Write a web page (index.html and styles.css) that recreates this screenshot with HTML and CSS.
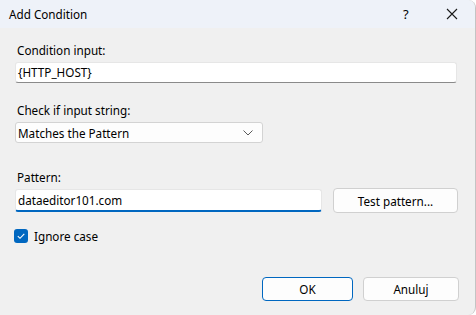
FILE: index.html
```html
<!DOCTYPE html>
<html>
<head>
<meta charset="utf-8">
<link rel="stylesheet" href="styles.css">
</head>
<body>
<div class="window">
  <div class="titlebar">
    <span class="title">Add Condition</span>
    <span class="help">?</span>
    <span class="close">
      <svg width="12" height="12" viewBox="0 0 12 12"><path d="M1 1L11 11M11 1L1 11" stroke="#1a1a1a" stroke-width="1.1" fill="none"/></svg>
    </span>
  </div>
  <div class="content">
    <div class="label l1">Condition input:</div>
    <div class="input wide">{HTTP_HOST}</div>

    <div class="label l2">Check if input string:</div>
    <div class="select">
      <span>Matches the Pattern</span>
      <svg width="10" height="6" viewBox="0 0 10 6"><path d="M0.5 0.5L5 5L9.5 0.5" stroke="#5a5a5a" stroke-width="1" fill="none"/></svg>
    </div>

    <div class="label l3">Pattern:</div>
    <div class="pattern-row">
      <div class="input focused">dataeditor101.com</div>
      <div class="button test">Test pattern...</div>
    </div>

    <div class="check-row">
      <span class="checkbox">
        <svg width="14" height="14" viewBox="0 0 14 14"><path d="M3.8 7.2L6 9.3L10.3 4.8" stroke="#fff" stroke-width="1.1" fill="none"/></svg>
      </span>
      <span class="check-label">Ignore case</span>
    </div>

    <div class="actions">
      <div class="button ok">OK</div>
      <div class="button cancel">Anuluj</div>
    </div>
  </div>
</div>
</body>
</html>
```
FILE: styles.css
```css
html, body {
  margin: 0;
  padding: 0;
  background: #ffffff;
}
body {
  font-family: "Noto Sans", "Open Sans", sans-serif;
  font-size: 11.7px;
  color: #000;
}
.window {
  width: 475px;
  height: 315px;
  background: #f0f0f0;
  border-right: 1px solid #c4c4c4;
  border-top-right-radius: 8px;
  border-bottom-right-radius: 8px;
  overflow: hidden;
  display: flex;
  flex-direction: column;
}
.titlebar {
  height: 28px;
  background: #eef2f9;
  display: flex;
  align-items: center;
  flex-shrink: 0;
}
.title {
  margin-left: 9px;
  flex: 1;
  line-height: 16px;
}
.help {
  width: 10px;
  margin-right: 33px;
  font-size: 13px;
}
.close {
  width: 12px;
  height: 12px;
  margin-right: 17px;
  display: flex;
}
.content {
  padding: 14px 0 0 15px;
  display: flex;
  flex-direction: column;
}
.label {
  height: 16px;
  line-height: 16px;
  margin-left: 2px;
  margin-bottom: 4px;
}
.l2 { margin-top: 19px; }
.l3 { margin-top: 26px; margin-bottom: 3px; }
.input {
  box-sizing: border-box;
  background: #fff;
  border: 1px solid #e6e6e6;
  border-bottom: 1px solid #8a8a8a;
  border-radius: 3px;
  height: 21px;
  line-height: 19px;
  padding-left: 2px;
}
.wide { width: 442px; }
.select {
  box-sizing: border-box;
  width: 248px;
  height: 21px;
  background: #fdfdfd;
  border: 1px solid #d3d3d3;
  border-radius: 3px;
  display: flex;
  align-items: center;
  justify-content: space-between;
  padding: 0 9px 0 2px;
}
.pattern-row {
  display: flex;
  align-items: center;
  gap: 11px;
}
.focused {
  width: 307px;
  height: 23px;
  line-height: 20px;
  border-bottom: 2px solid #0067c0;
}
.button {
  box-sizing: border-box;
  background: #fdfdfd;
  border: 1px solid #d0d0d0;
  border-radius: 4px;
  display: flex;
  align-items: center;
  justify-content: center;
}
.test {
  width: 125px;
  height: 25px;
}
.check-row {
  display: flex;
  align-items: center;
  margin-top: 16px;
  height: 14px;
}
.checkbox {
  width: 14px;
  height: 14px;
  margin-left: -1px;
  border-radius: 3px;
  background: #0067c0;
  display: flex;
}
.check-label {
  margin-left: 6px;
  line-height: 16px;
}
.actions {
  display: flex;
  gap: 10px;
  margin-top: 34px;
  margin-left: 247px;
}
.ok {
  width: 91px;
  height: 24px;
  border-color: #0067c0;
}
.cancel {
  width: 96px;
  height: 24px;
}
```
